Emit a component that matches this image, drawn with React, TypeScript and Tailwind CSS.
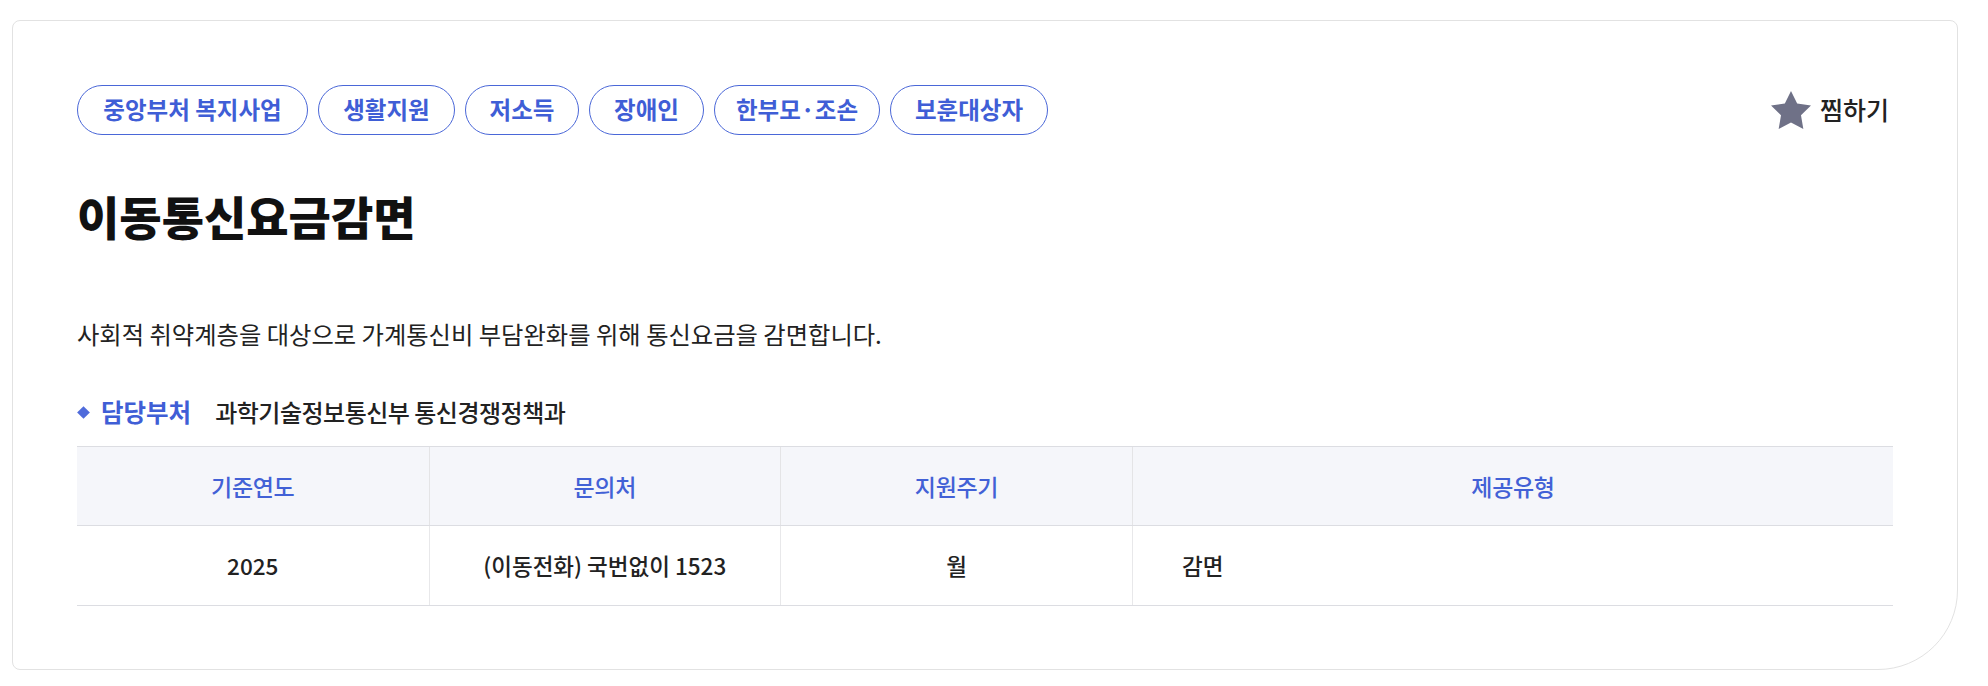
import React from "react";

const tags: { label: string; w: string }[] = [
  { label: "중앙부처 복지사업", w: "w-[231px]" },
  { label: "생활지원", w: "w-[137px]" },
  { label: "저소득", w: "w-[114px]" },
  { label: "장애인", w: "w-[115px]" },
  { label: "한부모·조손", w: "w-[166px]" },
  { label: "보훈대상자", w: "w-[158px]" },
];

function Star() {
  return (
    <svg width="40" height="38" viewBox="2 2 20 19.02" aria-hidden="true">
      <path
        d="M12 2l3.09 6.26L22 9.27l-5 4.87 1.18 6.88L12 17.77l-6.18 3.25L7 14.14 2 9.27l6.91-1.01L12 2z"
        fill="#6f7187"
      />
    </svg>
  );
}

export default function App() {
  return (
    <div
      className="min-h-[686px] bg-white pt-[20px] pl-[12px]"
      style={{ fontFamily: '"Noto Sans CJK KR", "Noto Sans", sans-serif' }}
    >
      <div className="w-[1946px] h-[650px] border border-[#e2e2e2] rounded-[8px] rounded-br-[80px] bg-white px-[64px] pt-[64px]">
        <div className="flex items-center justify-between h-[50px]">
          <div className="flex items-center gap-[10px]">
            {tags.map((t) => (
              <span
                key={t.label}
                className={`${t.w} h-[50px] flex items-center justify-center whitespace-nowrap rounded-full border border-[#4a67d8] text-[#3f5ed6] text-[23.5px] font-semibold leading-none`}
              >
                {t.label}
              </span>
            ))}
          </div>
          <button className="flex items-center gap-[9px] text-[25px] font-medium text-[#222] mr-[4px]">
            <Star />
            <span>찜하기</span>
          </button>
        </div>

        <h1 className="mt-[53px] text-[46px] leading-[54px] font-black text-[#111]">
          이동통신요금감면
        </h1>

        <p className="mt-[76px] text-[24.3px] leading-[32px] text-[#222]">
          사회적 취약계층을 대상으로 가계통신비 부담완화를 위해 통신요금을 감면합니다.
        </p>

        <div className="mt-[46px] flex items-center h-[32px]">
          <span className="w-[9px] h-[9px] rotate-45 bg-[#4f6bdb] ml-[2px] mr-[13px]"></span>
          <span className="text-[24.5px] font-bold text-[#3f5ed6]">담당부처</span>
          <span className="ml-[24px] text-[24px] tracking-[-0.5px] font-medium text-[#222]">과학기술정보통신부 통신경쟁정책과</span>
        </div>

        <div className="mt-[18px] border-t border-[#dcdde2]">
          <div className="grid grid-cols-[351.5px_351.5px_352px_1fr] bg-[#f5f6fa] border-b border-[#dcdde2] h-[79px] text-[23px] font-medium text-[#4261d6] tracking-[-0.3px]">
            <div className="flex items-center justify-center">기준연도</div>
            <div className="flex items-center justify-center border-l border-[#e4e4e6]">문의처</div>
            <div className="flex items-center justify-center border-l border-[#e4e4e6]">지원주기</div>
            <div className="flex items-center justify-center border-l border-[#e4e4e6]">제공유형</div>
          </div>
          <div className="grid grid-cols-[351.5px_351.5px_352px_1fr] border-b border-[#dcdde2] h-[80px] text-[22.5px] font-medium text-[#222]">
            <div className="flex items-center justify-center">2025</div>
            <div className="flex items-center justify-center border-l border-[#e8e8ea]">(이동전화) 국번없이 1523</div>
            <div className="flex items-center justify-center border-l border-[#e8e8ea]">월</div>
            <div className="flex items-center pl-[49px] border-l border-[#e8e8ea]">감면</div>
          </div>
        </div>
      </div>
    </div>
  );
}
